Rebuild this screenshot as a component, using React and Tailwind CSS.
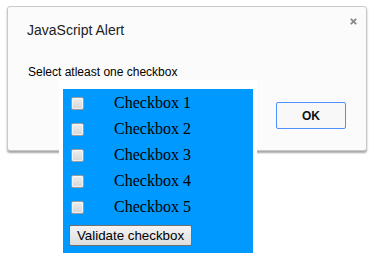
export default function App() {
  const items = ["Checkbox 1", "Checkbox 2", "Checkbox 3", "Checkbox 4", "Checkbox 5"];
  return (
    <div className="relative w-[369px] h-[261px] bg-white overflow-hidden">
      <div className="absolute left-[7px] top-[6px] w-[360px] h-[145px] border border-[#c9c9c9] rounded-[3px] bg-[#fbfbfb] shadow-[0_2px_2px_rgba(0,0,0,0.35)] font-['Liberation_Sans',Arial,sans-serif]">
        <div className="absolute right-[9px] top-[11px] w-[7px] h-[7px]">
          <svg width="7" height="7" viewBox="0 0 7 7">
            <path d="M0.8 0.8 L6.2 6.2 M6.2 0.8 L0.8 6.2" stroke="#8a8a8a" strokeWidth="1.9" strokeLinecap="butt" />
          </svg>
        </div>
        <div className="flex flex-col">
          <div className="pl-[19px] pt-[15px] text-[14px] leading-[16px] text-[#222]">JavaScript Alert</div>
          <div className="pl-[20px] mt-[27px] text-[12px] leading-[14px] text-black">Select atleast one checkbox</div>
          <div className="flex justify-end pr-[20px] mt-[23px]">
            <button className="w-[70px] h-[27px] border border-[#4d90fe] rounded-[2px] bg-[#f8f8f8] text-[12px] font-bold text-[#111] flex items-center justify-center">
              OK
            </button>
          </div>
        </div>
      </div>

      <div className="relative z-10 ml-[59px] pt-[9px] mt-[80px] w-[198px] h-[181px] bg-white px-[4px]">
        <div className="w-[190px] h-[164px] bg-[#0099ff] pl-[6px] pt-[1px] flex flex-col">
          {items.map((t) => (
            <div key={t} className="flex items-center h-[26px] pl-[2px]">
              <div className="w-[13px] h-[13px] border border-[#9c9c9c] rounded-[2px] bg-gradient-to-b from-[#eeeeee] to-[#d6d6d6] shadow-[inset_0_0_0_1px_rgba(255,255,255,0.6)]" />
              <span className="ml-[30px] font-['Liberation_Serif','Times_New_Roman',serif] text-[16px] leading-[26px] text-black">{t}</span>
            </div>
          ))}
          <button className="mt-[5px] w-[123px] h-[21px] border border-[#707070] rounded-[2px] bg-gradient-to-b from-[#f4f4f4] to-[#dedede] font-['Liberation_Sans',Arial,sans-serif] text-[13.33px] text-black flex items-center justify-center">
            Validate checkbox
          </button>
        </div>
      </div>
    </div>
  );
}
